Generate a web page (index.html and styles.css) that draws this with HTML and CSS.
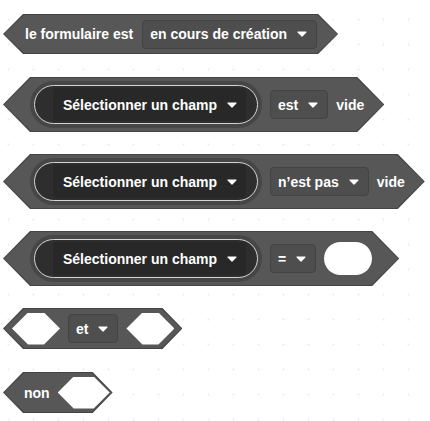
FILE: index.html
```html
<!DOCTYPE html>
<html lang="fr">
<head>
  <meta charset="UTF-8" />
  <title>Blocs formulaire</title>
  <link rel="stylesheet" href="styles.css">
</head>
<body>
  <div class="workspace">

    <div class="block block-sm b-form">
      <span class="label">le formulaire est</span>
      <span class="dropdown">en cours de création
        <svg class="caret" viewBox="0 0 10 6"><path d="M1 1H9L5 5Z"/></svg>
      </span>
    </div>

    <div class="block block-md b-field">
      <span class="field-ring">
        <span class="field-pill">
          <span class="select">Sélectionner un champ
            <svg class="caret" viewBox="0 0 10 6"><path d="M1 1H9L5 5Z"/></svg>
          </span>
        </span>
      </span>
      <span class="dropdown">est
        <svg class="caret" viewBox="0 0 10 6"><path d="M1 1H9L5 5Z"/></svg>
      </span>
      <span class="label">vide</span>
    </div>

    <div class="block block-md b-field">
      <span class="field-ring">
        <span class="field-pill">
          <span class="select">Sélectionner un champ
            <svg class="caret" viewBox="0 0 10 6"><path d="M1 1H9L5 5Z"/></svg>
          </span>
        </span>
      </span>
      <span class="dropdown">n’est pas
        <svg class="caret" viewBox="0 0 10 6"><path d="M1 1H9L5 5Z"/></svg>
      </span>
      <span class="label">vide</span>
    </div>

    <div class="block block-md b-compare">
      <span class="field-ring">
        <span class="field-pill">
          <span class="select">Sélectionner un champ
            <svg class="caret" viewBox="0 0 10 6"><path d="M1 1H9L5 5Z"/></svg>
          </span>
        </span>
      </span>
      <span class="dropdown">=
        <svg class="caret" viewBox="0 0 10 6"><path d="M1 1H9L5 5Z"/></svg>
      </span>
      <span class="slot-round"></span>
    </div>

    <div class="block block-sm b-and">
      <span class="slot-hex"></span>
      <span class="dropdown">et
        <svg class="caret" viewBox="0 0 10 6"><path d="M1 1H9L5 5Z"/></svg>
      </span>
      <span class="slot-hex"></span>
    </div>

    <div class="block block-sm b-not">
      <span class="label">non</span>
      <span class="slot-hex wide"></span>
    </div>

  </div>
</body>
</html>
```

FILE: styles.css
```css
html, body {
  height: 100%;
}
body {
  margin: 0;
  font-family: "Liberation Sans", Arial, sans-serif;
  font-size: 14px;
  font-weight: bold;
  color: #fff;
  background-color: #fff;
  background-image: radial-gradient(circle, #eeeeee 0.8px, transparent 1.4px);
  background-size: 25px 25px;
  background-position: -4px 7px;
}
.workspace {
  display: flex;
  flex-direction: column;
  align-items: flex-start;
  gap: 22px;
  padding: 14px 0 0 3px;
}

/* hexagonal boolean block */
.block {
  --tip: 20px;
  position: relative;
  isolation: isolate;
  display: flex;
  align-items: center;
  gap: 8px;
  box-sizing: border-box;
  background: #444;
  white-space: nowrap;
  clip-path: polygon(var(--tip) 0, calc(100% - var(--tip)) 0, 100% 50%, calc(100% - var(--tip)) 100%, var(--tip) 100%, 0 50%);
}
.block::before {
  content: "";
  position: absolute;
  inset: 1px;
  z-index: -1;
  background: #575757;
  clip-path: polygon(var(--tip) 0, calc(100% - var(--tip)) 0, 100% 50%, calc(100% - var(--tip)) 100%, var(--tip) 100%, 0 50%);
}
.block-sm {
  height: 41px;
}
.block-md {
  --tip: 27px;
  height: 55px;
}
.b-form {
  height: 40px;
  margin-bottom: 1px;
  gap: 9px;
  padding: 0 21px 0 22px;
}
.b-field {
  padding: 0 20px 0 27px;
}
.b-compare {
  padding: 0 27px 0 27px;
}
.b-and {
  padding: 0 8px 0 9px;
}
.b-not {
  margin-top: 1px;
  padding: 0 3px 0 21px;
}

.dropdown {
  display: flex;
  align-items: center;
  gap: 10px;
  height: 29px;
  box-sizing: border-box;
  padding: 0 9px 0 7px;
  border: 1px solid #434343;
  border-radius: 4px;
  background: #4e4e4e;
}
.caret {
  width: 10px;
  height: 6px;
  fill: #fff;
  stroke: #fff;
  stroke-width: 1.2;
  stroke-linejoin: round;
}

/* round reporter holding the field menu */
.field-ring {
  display: flex;
  padding: 4px;
  border-radius: 24px;
  background: #464646;
}
.field-pill {
  display: flex;
  align-items: center;
  height: 39px;
  box-sizing: border-box;
  padding: 0 11px 0 18px;
  border: 1px solid #d4d4d4;
  border-radius: 20px;
  background: #2e2e2e;
}
.select {
  display: flex;
  align-items: center;
  gap: 10px;
  height: 33px;
  padding: 0 9px 0 10px;
  border-radius: 4px;
  background: #282828;
}

/* empty inputs */
.slot-round {
  width: 48px;
  height: 33px;
  border-radius: 17px;
  background: #fff;
}
.slot-hex {
  width: 48px;
  height: 32px;
  background: #fff;
  clip-path: polygon(16px 0, calc(100% - 16px) 0, 100% 50%, calc(100% - 16px) 100%, 16px 100%, 0 50%);
}
.slot-hex.wide {
  width: 52px;
}
```
